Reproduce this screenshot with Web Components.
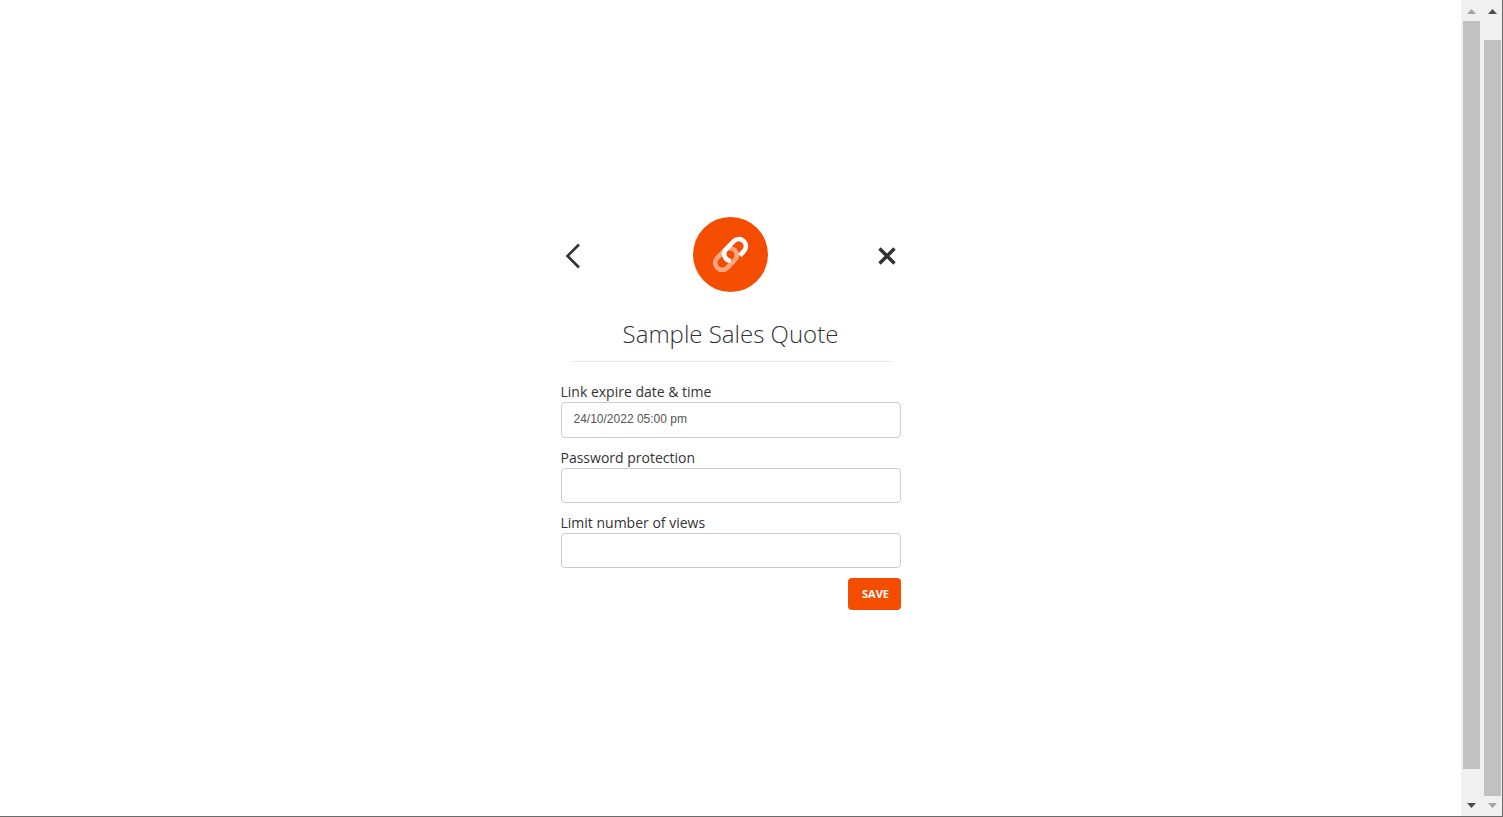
<!DOCTYPE html>
<html lang="en">
<head>
<meta charset="utf-8">
<meta name="viewport" content="width=device-width, initial-scale=1">
<title>Sample Sales Quote</title>
<style>
  html, body { height: 100%; margin: 0; }
  body { background: #fff; color: #333; font-family: "Open Sans", sans-serif; overflow: hidden; }
</style>
</head>
<body>
<app-window>
  <share-panel heading="Sample Sales Quote">
    <form-field label="Link expire date &amp; time" value="24/10/2022 05:00 pm"></form-field>
    <form-field label="Password protection" type="password"></form-field>
    <form-field label="Limit number of views"></form-field>
  </share-panel>
  <scroll-track slot="bars" class="inner" at-start></scroll-track>
  <scroll-track slot="bars" class="outer" at-end></scroll-track>
</app-window>
<script>
class BaseElement extends HTMLElement {
  render(html) { this.attachShadow({ mode: 'open' }).innerHTML = html; }
}

customElements.define('app-window', class extends BaseElement {
  connectedCallback() {
    this.render(`
      <style>
        :host { display: flex; box-sizing: border-box; height: 100%; border: solid #6b6b6b; border-width: 0 1px 1px 0; }
        main { flex: 1; min-width: 0; display: flex; justify-content: center; align-items: flex-start; padding-top: 217px; }
        aside { display: flex; gap: 4px; padding: 0 1px 0 2px; background: #f0f0f0; }
        ::slotted(.inner) { --before: 0px; --after: 27px; }
        ::slotted(.outer) { --before: 19px; --after: 0px; }
      </style>
      <main><slot></slot></main>
      <aside><slot name="bars"></slot></aside>`);
  }
});

customElements.define('scroll-track', class extends BaseElement {
  connectedCallback() {
    const dim = '#a3a3a3', dark = '#4d4d4d';
    const up = this.hasAttribute('at-start') ? dim : dark;
    const down = this.hasAttribute('at-end') ? dim : dark;
    this.render(`
      <style>
        :host { display: flex; flex-direction: column; width: 17px; }
        svg { display: block; width: 17px; height: 21px; flex: none; }
        svg:last-child { height: 20px; }
        div { flex: 1; background: #c1c1c1; margin: var(--before) 0 var(--after); }
      </style>
      <svg viewBox="0 0 17 21"><path d="M4 14 8.500 9 13 14z" fill="${up}"/></svg>
      <div></div>
      <svg viewBox="0 0 17 20"><path d="M4 7h9l-4.500 5z" fill="${down}"/></svg>`);
  }
});

customElements.define('link-badge', class extends BaseElement {
  connectedCallback() {
    this.render(`
      <style>
        :host { display: block; width: 75px; height: 75px; }
        svg { display: block; width: 100%; height: 100%; }
      </style>
      <svg viewBox="0 0 75 75" fill="none" stroke-width="4.600" aria-hidden="true">
        <circle cx="37.500" cy="37.500" r="37.500" fill="#f54d00"/>
        <rect x="-12.400" y="-7" width="24.800" height="14" rx="7" stroke="#faa680" transform="translate(33 42) rotate(-45)"/>
        <path d="M-10.600 4.700A7 7 0 0 1 -5.400 -7H5.400A7 7 0 0 1 8.500 6.300Q6.500 7.300 -.5 7.300" stroke="#fff" transform="translate(42 33) rotate(-45)"/>
      </svg>`);
  }
});

customElements.define('share-panel', class extends BaseElement {
  connectedCallback() {
    this.render(`
      <style>
        :host { display: block; width: 340px; max-width: 100%; }
        header { display: flex; justify-content: space-between; align-items: center; }
        button { border: 0; margin: 0; cursor: pointer; }
        .icon { display: block; padding: 3px 0 0; background: none; }
        .icon svg { display: block; width: 28px; height: 28px; }
        h1 { margin: 24px 10px 20px; padding-bottom: 10px; border-bottom: 1px solid #e7e7e7; font-size: 24px; line-height: 35px; font-weight: 300; text-align: center; color: #333; }
        form { display: flex; flex-direction: column; gap: 10px; }
        .save { align-self: flex-end; width: 53px; height: 32px; padding: 0 0 0 3px; border-radius: 4px; background: #f54d00; color: #fff; font: 700 11px/32px "Open Sans", sans-serif; }
      </style>
      <header>
        <button class="icon" type="button" aria-label="Back">
          <svg viewBox="0 0 28 28"><path d="M18 2.500 6.500 14 18 25.500" fill="none" stroke="#333" stroke-width="2.600"/></svg>
        </button>
        <link-badge></link-badge>
        <button class="icon" type="button" aria-label="Close">
          <svg viewBox="0 0 28 28"><path d="M6.500 6.500 21.500 21.500M21.500 6.500 6.500 21.500" fill="none" stroke="#333" stroke-width="3.500"/></svg>
        </button>
      </header>
      <h1></h1>
      <form>
        <slot></slot>
        <button class="save" type="button">SAVE</button>
      </form>`);
    this.shadowRoot.querySelector('h1').textContent = this.getAttribute('heading');
  }
});

customElements.define('form-field', class extends BaseElement {
  connectedCallback() {
    this.render(`
      <style>
        :host { display: block; }
        label { display: block; font-size: 14px; line-height: 20px; color: #333; }
        input { display: block; box-sizing: border-box; width: 100%; height: 35px; padding: 0 12px 2px; border: 1px solid #ccc; border-radius: 4px; background: #fff; color: #555; font: 12px "Liberation Sans", Arial, sans-serif; }
        :host([value]) input { height: 36px; }
      </style>
      <label for="control"></label>
      <input id="control">`);
    this.shadowRoot.querySelector('label').textContent = this.getAttribute('label');
    const input = this.shadowRoot.querySelector('input');
    input.type = this.getAttribute('type') || 'text';
    input.value = this.getAttribute('value') || '';
  }
});
</script>
</body>
</html>
